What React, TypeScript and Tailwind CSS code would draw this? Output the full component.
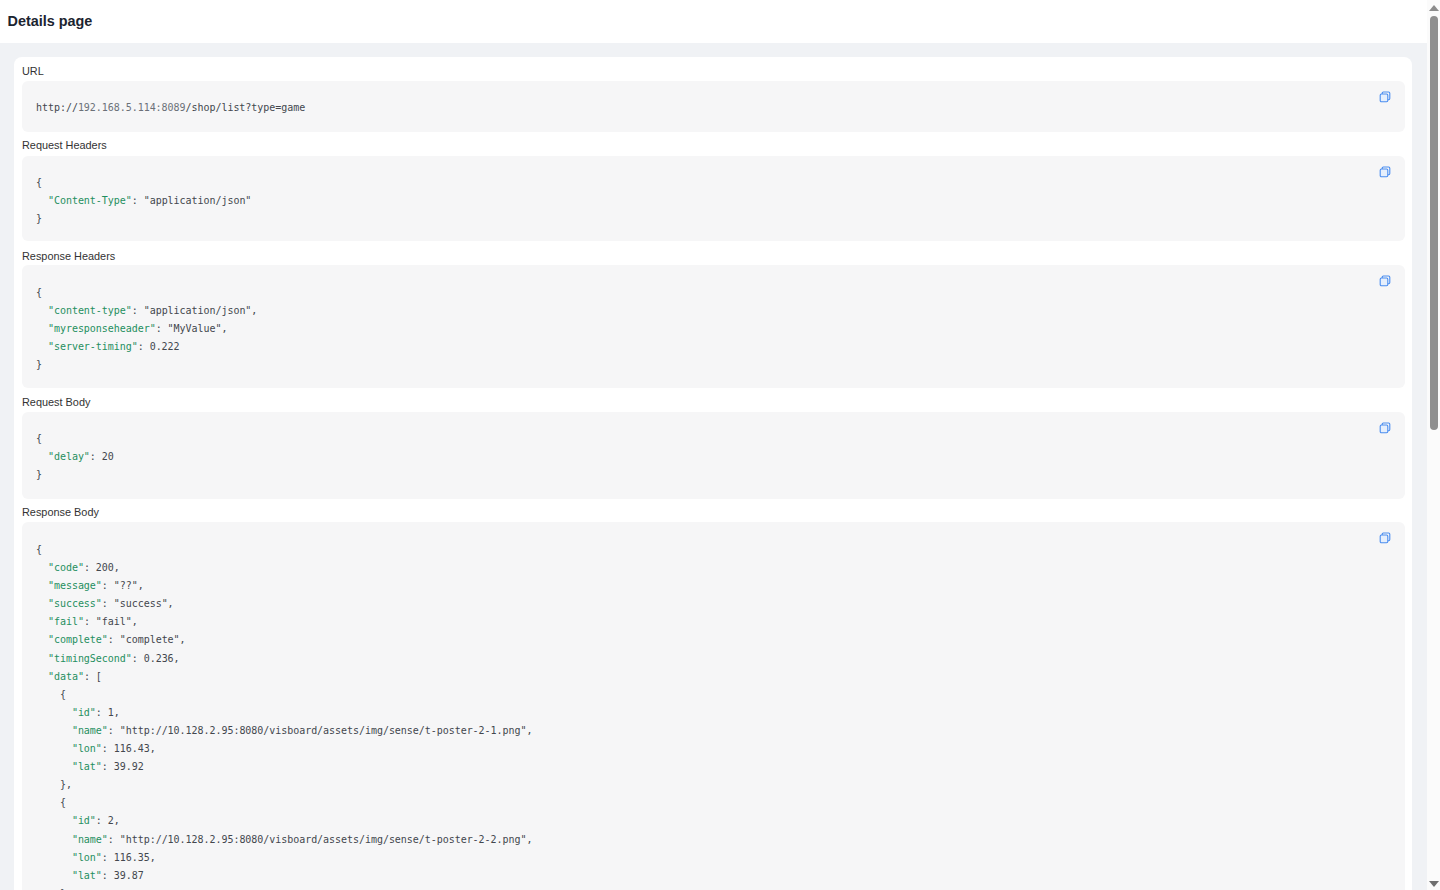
import { FC, ReactNode } from "react";

// 複製アイコン
const CopyIcon: FC = () => (
  <svg width="12" height="12" viewBox="0 0 12 12" fill="none" stroke="#4a8df0" strokeWidth="1.1" className="absolute right-[14px] top-[10px]">
    <rect x="1.2" y="3" width="7.6" height="7.8" rx="1.2" fill="#e6effc" />
    <path d="M3.2 3V2.2A1.2 1.2 0 0 1 4.4 1h5.2a1.2 1.2 0 0 1 1.2 1.2v5.4a1.2 1.2 0 0 1-1.2 1.2h-.8" />
  </svg>
);

const K: FC<{ children: ReactNode }> = ({ children }) => <span className="text-[#1f8f60]">{children}</span>;

interface SectionProps {
  label: string;
  blockClass: string;
  labelClass: string;
  children: ReactNode;
}

const Section: FC<SectionProps> = ({ label, blockClass, labelClass, children }) => (
  <div>
    <div className={`text-[10.9px] leading-[14px] text-[#333] ${labelClass}`}>{label}</div>
    <div className={`relative rounded-md bg-[#f6f6f7] pl-[14px] font-['DejaVu_Sans_Mono',monospace] text-[10px] leading-[18.1px] tracking-[-0.04px] whitespace-pre text-[#43474e] ${blockClass}`}>
      <CopyIcon />
      {children}
    </div>
  </div>
);

// JSONの1行: キーと値
const Row: FC<{ indent: string; k: string; v: string }> = ({ indent, k, v }) => (
  <div>
    {indent}
    <K>"{k}"</K>: {v}
  </div>
);

export default function App() {
  return (
    <div className="flex h-[890px] w-full overflow-hidden bg-white font-['Liberation_Sans',sans-serif]">
      <div className="flex w-[1427px] flex-col">
        <div className="flex h-[43px] shrink-0 items-center bg-white pl-[7.5px] pt-[1px] text-[14.4px] font-bold text-[#1b2430]">Details page</div>
        <div className="min-h-0 flex-1 overflow-hidden bg-[#f0f2f5] pl-[14px] pr-[15px] pt-[14px]">
          <div className="rounded-t-lg bg-white pl-2 pr-[7px] pt-[7px]">
            <Section label="URL" labelClass="mb-[3px]" blockClass="h-[51px] pt-[18px]">
              <div>
                http://<span className="text-[#6b7078]">192.168.5.114:8089</span>/shop/list?type=game
              </div>
            </Section>
            <Section label="Request Headers" labelClass="mt-[6px] mb-[4px]" blockClass="h-[85px] pt-[18px]">
              <div>{"{"}</div>
              <Row indent="  " k="Content-Type" v={'"application/json"'} />
              <div>{"}"}</div>
            </Section>
            <Section label="Response Headers" labelClass="mt-[8px] mb-[2px]" blockClass="h-[123px] pt-[19px]">
              <div>{"{"}</div>
              <Row indent="  " k="content-type" v={'"application/json",'} />
              <Row indent="  " k="myresponseheader" v={'"MyValue",'} />
              <Row indent="  " k="server-timing" v="0.222" />
              <div>{"}"}</div>
            </Section>
            <Section label="Request Body" labelClass="mt-[7px] mb-[3px]" blockClass="h-[87px] pt-[18px]">
              <div>{"{"}</div>
              <Row indent="  " k="delay" v="20" />
              <div>{"}"}</div>
            </Section>
            <Section label="Response Body" labelClass="mt-[6px] mb-[3px]" blockClass="h-[400px] pt-[19px]">
              <div>{"{"}</div>
              <Row indent="  " k="code" v="200," />
              <Row indent="  " k="message" v={'"??",'} />
              <Row indent="  " k="success" v={'"success",'} />
              <Row indent="  " k="fail" v={'"fail",'} />
              <Row indent="  " k="complete" v={'"complete",'} />
              <Row indent="  " k="timingSecond" v="0.236," />
              <Row indent="  " k="data" v="[" />
              <div>{"    {"}</div>
              <Row indent="      " k="id" v="1," />
              <Row indent="      " k="name" v={'"http://10.128.2.95:8080/visboard/assets/img/sense/t-poster-2-1.png",'} />
              <Row indent="      " k="lon" v="116.43," />
              <Row indent="      " k="lat" v="39.92" />
              <div>{"    },"}</div>
              <div>{"    {"}</div>
              <Row indent="      " k="id" v="2," />
              <Row indent="      " k="name" v={'"http://10.128.2.95:8080/visboard/assets/img/sense/t-poster-2-2.png",'} />
              <Row indent="      " k="lon" v="116.35," />
              <Row indent="      " k="lat" v="39.87" />
              <div>{"    }"}</div>
            </Section>
          </div>
        </div>
      </div>
      {/* スクロールバー */}
      <div className="flex w-[13px] flex-col items-center bg-[#fbfbfb]">
        <svg width="10" height="6" viewBox="0 0 10 6" className="mt-[5px]"><path d="M5 0l5 6H0z" fill="#8c8c8c" /></svg>
        <div className="mt-[5px] h-[414px] w-[8px] rounded-full bg-[#8f8f8f]" />
        <svg width="10" height="6" viewBox="0 0 10 6" className="mt-auto mb-[3px]"><path d="M0 0h10L5 6z" fill="#6f6f6f" /></svg>
      </div>
    </div>
  );
}
